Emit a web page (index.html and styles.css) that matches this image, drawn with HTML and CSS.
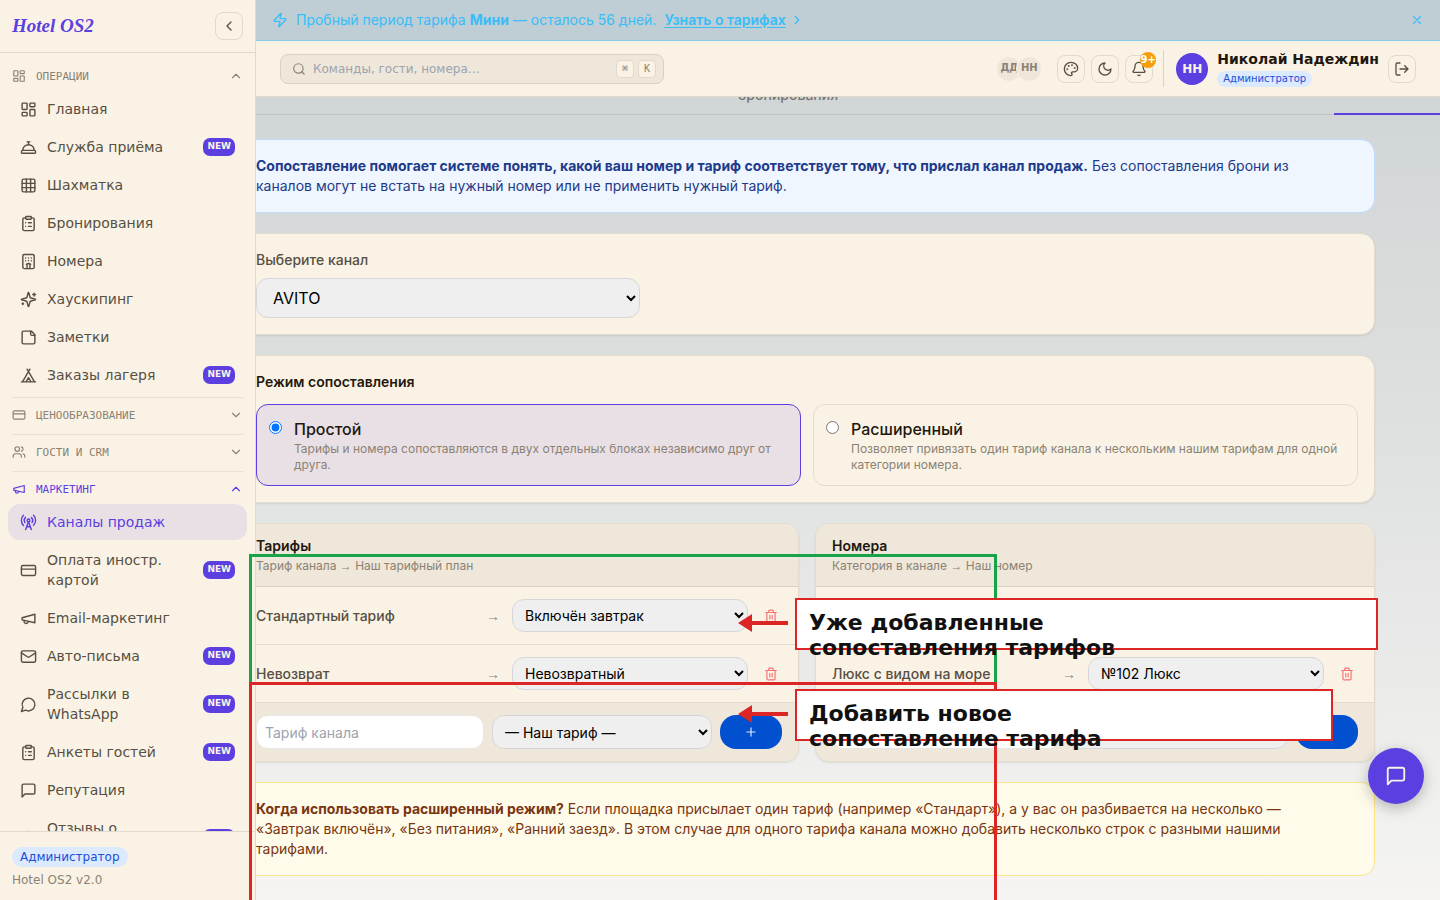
FILE: index.html
```html
<!DOCTYPE html>
<html lang="ru">
<head>
    <meta charset="UTF-8">
    <meta name="viewport" content="width=device-width, initial-scale=1.0">
    <title>Hotel OS2</title>
    <link rel="stylesheet" href="styles.css">
</head>
<body>
    <!-- icons -->
    <svg class="sprite" aria-hidden="true">
        <symbol id="i-dashboard" viewBox="0 0 24 24"><rect x="3" y="3" width="7" height="9" rx="1"/><rect x="14" y="3" width="7" height="5" rx="1"/><rect x="14" y="12" width="7" height="9" rx="1"/><rect x="3" y="16" width="7" height="5" rx="1"/></symbol>
        <symbol id="i-bell-service" viewBox="0 0 24 24"><path d="M3 20a1 1 0 0 1-1-1v-1a2 2 0 0 1 2-2h16a2 2 0 0 1 2 2v1a1 1 0 0 1-1 1Z"/><path d="M20 16a8 8 0 1 0-16 0"/><path d="M12 4v4"/><path d="M10 4h4"/></symbol>
        <symbol id="i-grid" viewBox="0 0 24 24"><rect x="3" y="3" width="18" height="18" rx="2"/><path d="M3 9h18M3 15h18M9 3v18M15 3v18"/></symbol>
        <symbol id="i-clipboard" viewBox="0 0 24 24"><rect x="8" y="2" width="8" height="4" rx="1"/><path d="M16 4h2a2 2 0 0 1 2 2v14a2 2 0 0 1-2 2H6a2 2 0 0 1-2-2V6a2 2 0 0 1 2-2h2"/><path d="M12 11h4M12 16h4M8 11h.01M8 16h.01"/></symbol>
        <symbol id="i-hotel" viewBox="0 0 24 24"><rect x="4" y="2" width="16" height="20" rx="2"/><path d="M10 22v-6.57M14 15.43V22M15 16a5 5 0 0 0-6 0M12 11h.01M12 7h.01M16 11h.01M16 7h.01M8 11h.01M8 7h.01"/></symbol>
        <symbol id="i-sparkles" viewBox="0 0 24 24"><path d="M9.94 15.5A2 2 0 0 0 8.5 14.06l-6.14-1.58a.5.5 0 0 1 0-.96L8.5 9.94A2 2 0 0 0 9.94 8.5l1.58-6.14a.5.5 0 0 1 .96 0L14.06 8.5A2 2 0 0 0 15.5 9.94l6.14 1.58a.5.5 0 0 1 0 .96L15.5 14.06a2 2 0 0 0-1.44 1.44l-1.58 6.14a.5.5 0 0 1-.96 0z"/><path d="M20 3v4M22 5h-4M4 17v2M5 18H3"/></symbol>
        <symbol id="i-note" viewBox="0 0 24 24"><path d="M16 3H5a2 2 0 0 0-2 2v14a2 2 0 0 0 2 2h14a2 2 0 0 0 2-2V8Z"/><path d="M15 3v4a2 2 0 0 0 2 2h4"/></symbol>
        <symbol id="i-tent" viewBox="0 0 24 24"><path d="M3.5 21 14 3M20.5 21 10 3M15.5 21 12 15l-3.5 6M2 21h20"/></symbol>
        <symbol id="i-card" viewBox="0 0 24 24"><rect x="2" y="5" width="20" height="14" rx="2"/><path d="M2 10h20"/></symbol>
        <symbol id="i-users" viewBox="0 0 24 24"><path d="M16 21v-2a4 4 0 0 0-4-4H6a4 4 0 0 0-4 4v2"/><circle cx="9" cy="7" r="4"/><path d="M22 21v-2a4 4 0 0 0-3-3.870M16 3.130a4 4 0 0 1 0 7.750"/></symbol>
        <symbol id="i-megaphone" viewBox="0 0 24 24"><path d="m3 11 18-5v12L3 14v-3z"/><path d="M11.6 16.8a3 3 0 1 1-5.8-1.6"/></symbol>
        <symbol id="i-tower" viewBox="0 0 24 24"><path d="M4.9 16.1C1 12.2 1 5.8 4.9 1.9M7.8 4.7a6.14 6.14 0 0 0-.8 7.5"/><circle cx="12" cy="9" r="2"/><path d="M16.2 4.8c2 2 2.26 5.11.8 7.47M19.1 1.9a9.96 9.96 0 0 1 0 14.1M9.5 18h5M8 22l4-11 4 11"/></symbol>
        <symbol id="i-mail" viewBox="0 0 24 24"><rect x="2" y="4" width="20" height="16" rx="2"/><path d="m22 7-8.97 5.7a1.94 1.94 0 0 1-2.06 0L2 7"/></symbol>
        <symbol id="i-bubble" viewBox="0 0 24 24"><path d="M7.9 20A9 9 0 1 0 4 16.1L2 22Z"/></symbol>
        <symbol id="i-message" viewBox="0 0 24 24"><path d="M21 15a2 2 0 0 1-2 2H7l-4 4V5a2 2 0 0 1 2-2h14a2 2 0 0 1 2 2z"/></symbol>
        <symbol id="i-star" viewBox="0 0 24 24"><path d="m12 2 3.1 6.3 6.9 1-5 4.9 1.2 6.8-6.2-3.2L5.8 21 7 14.2 2 9.3l6.9-1z"/></symbol>
        <symbol id="i-up" viewBox="0 0 24 24"><path d="m18 15-6-6-6 6"/></symbol>
        <symbol id="i-down" viewBox="0 0 24 24"><path d="m6 9 6 6 6-6"/></symbol>
        <symbol id="i-left" viewBox="0 0 24 24"><path d="m15 18-6-6 6-6"/></symbol>
        <symbol id="i-right" viewBox="0 0 24 24"><path d="m9 18 6-6-6-6"/></symbol>
        <symbol id="i-zap" viewBox="0 0 24 24"><path d="M4 14a1 1 0 0 1-.78-1.63l9.9-10.2a.5.5 0 0 1 .86.46l-1.92 6.02A1 1 0 0 0 13 10h7a1 1 0 0 1 .78 1.63l-9.9 10.2a.5.5 0 0 1-.86-.46l1.92-6.02A1 1 0 0 0 11 14z"/></symbol>
        <symbol id="i-x" viewBox="0 0 24 24"><path d="M18 6 6 18M6 6l12 12"/></symbol>
        <symbol id="i-search" viewBox="0 0 24 24"><circle cx="11" cy="11" r="8"/><path d="m21 21-4.3-4.3"/></symbol>
        <symbol id="i-palette" viewBox="0 0 24 24"><circle cx="13.5" cy="6.5" r=".5"/><circle cx="17.5" cy="10.5" r=".5"/><circle cx="8.5" cy="7.5" r=".5"/><circle cx="6.5" cy="12.5" r=".5"/><path d="M12 2C6.5 2 2 6.5 2 12s4.5 10 10 10c.93 0 1.65-.75 1.65-1.69 0-.44-.18-.83-.44-1.12-.29-.29-.44-.65-.44-1.13a1.64 1.64 0 0 1 1.67-1.67h2c3.05 0 5.55-2.5 5.55-5.55C21.97 6.01 17.46 2 12 2z"/></symbol>
        <symbol id="i-moon" viewBox="0 0 24 24"><path d="M12 3a6 6 0 0 0 9 9 9 9 0 1 1-9-9Z"/></symbol>
        <symbol id="i-bell" viewBox="0 0 24 24"><path d="M10.27 21a2 2 0 0 0 3.46 0M3.26 15.33A1 1 0 0 0 4 17h16a1 1 0 0 0 .74-1.67C19.41 13.96 18 12.5 18 8A6 6 0 0 0 6 8c0 4.5-1.41 5.96-2.74 7.33"/></symbol>
        <symbol id="i-logout" viewBox="0 0 24 24"><path d="M9 21H5a2 2 0 0 1-2-2V5a2 2 0 0 1 2-2h4M16 17l5-5-5-5M21 12H9"/></symbol>
        <symbol id="i-trash" viewBox="0 0 24 24"><path d="M3 6h18M19 6v14a2 2 0 0 1-2 2H7a2 2 0 0 1-2-2V6M8 6V4a2 2 0 0 1 2-2h4a2 2 0 0 1 2 2v2M10 11v6M14 11v6"/></symbol>
        <symbol id="i-plus" viewBox="0 0 24 24"><path d="M5 12h14M12 5v14"/></symbol>
    </svg>

    <div class="app">
        <aside class="sidebar">
            <div class="brand">
                <a class="logo" href="#">Hotel OS2</a>
                <button class="icon-btn" type="button" aria-label="Свернуть"><svg class="icon icon-16"><use href="#i-left"/></svg></button>
            </div>
            <nav class="nav">
                <div class="group">
                    <button class="group-head" type="button"><svg class="icon icon-14"><use href="#i-dashboard"/></svg><span>Операции</span><svg class="icon icon-14"><use href="#i-up"/></svg></button>
                    <div class="group-items">
                        <a class="item" href="#"><svg class="icon icon-17"><use href="#i-dashboard"/></svg><span>Главная</span></a>
                        <a class="item" href="#"><svg class="icon icon-17"><use href="#i-bell-service"/></svg><span>Служба приёма</span><b class="new">NEW</b></a>
                        <a class="item" href="#"><svg class="icon icon-17"><use href="#i-grid"/></svg><span>Шахматка</span></a>
                        <a class="item" href="#"><svg class="icon icon-17"><use href="#i-clipboard"/></svg><span>Бронирования</span></a>
                        <a class="item" href="#"><svg class="icon icon-17"><use href="#i-hotel"/></svg><span>Номера</span></a>
                        <a class="item" href="#"><svg class="icon icon-17"><use href="#i-sparkles"/></svg><span>Хаускипинг</span></a>
                        <a class="item" href="#"><svg class="icon icon-17"><use href="#i-note"/></svg><span>Заметки</span></a>
                        <a class="item" href="#"><svg class="icon icon-17"><use href="#i-tent"/></svg><span>Заказы лагеря</span><b class="new">NEW</b></a>
                    </div>
                </div>
                <div class="group">
                    <button class="group-head" type="button"><svg class="icon icon-14"><use href="#i-card"/></svg><span>Ценообразование</span><svg class="icon icon-14"><use href="#i-down"/></svg></button>
                </div>
                <div class="group">
                    <button class="group-head" type="button"><svg class="icon icon-14"><use href="#i-users"/></svg><span>Гости и CRM</span><svg class="icon icon-14"><use href="#i-down"/></svg></button>
                </div>
                <div class="group">
                    <button class="group-head open" type="button"><svg class="icon icon-14"><use href="#i-megaphone"/></svg><span>Маркетинг</span><svg class="icon icon-14"><use href="#i-up"/></svg></button>
                    <div class="group-items">
                        <a class="item active" href="#"><svg class="icon icon-17"><use href="#i-tower"/></svg><span>Каналы продаж</span></a>
                        <a class="item" href="#"><svg class="icon icon-17"><use href="#i-card"/></svg><span>Оплата иностр. картой</span><b class="new">NEW</b></a>
                        <a class="item" href="#"><svg class="icon icon-17"><use href="#i-megaphone"/></svg><span>Email-маркетинг</span></a>
                        <a class="item" href="#"><svg class="icon icon-17"><use href="#i-mail"/></svg><span>Авто-письма</span><b class="new">NEW</b></a>
                        <a class="item" href="#"><svg class="icon icon-17"><use href="#i-bubble"/></svg><span>Рассылки в WhatsApp</span><b class="new">NEW</b></a>
                        <a class="item" href="#"><svg class="icon icon-17"><use href="#i-clipboard"/></svg><span>Анкеты гостей</span><b class="new">NEW</b></a>
                        <a class="item" href="#"><svg class="icon icon-17"><use href="#i-message"/></svg><span>Репутация</span></a>
                        <a class="item cut" href="#"><svg class="icon icon-17"><use href="#i-star"/></svg><span>Отзывы о</span><b class="new">NEW</b></a>
                    </div>
                </div>
            </nav>
            <div class="side-foot">
                <span class="role">Администратор</span>
                <p>Hotel OS2 v2.0</p>
            </div>
        </aside>

        <main class="main">
            <div class="trial">
                <svg class="icon icon-16"><use href="#i-zap"/></svg>
                <p>Пробный период тарифа <b>Мини</b> — осталось 56 дней.</p>
                <a href="#">Узнать о тарифах</a>
                <svg class="icon icon-14"><use href="#i-right"/></svg>
                <button type="button" aria-label="Закрыть"><svg class="icon icon-14"><use href="#i-x"/></svg></button>
            </div>

            <header class="topbar">
                <div class="search">
                    <svg class="icon icon-14"><use href="#i-search"/></svg>
                    <input type="text" placeholder="Команды, гости, номера…" aria-label="Поиск">
                    <kbd>⌘</kbd>
                    <kbd>K</kbd>
                </div>
                <div class="online"><span>ДД</span><span>НН</span></div>
                <div class="tools">
                    <button class="icon-btn" type="button" aria-label="Тема"><svg class="icon icon-16"><use href="#i-palette"/></svg></button>
                    <button class="icon-btn" type="button" aria-label="Тёмный режим"><svg class="icon icon-16"><use href="#i-moon"/></svg></button>
                    <button class="icon-btn" type="button" aria-label="Уведомления"><svg class="icon icon-16"><use href="#i-bell"/></svg><i class="count">9+</i></button>
                </div>
                <div class="user">
                    <span class="avatar">НН</span>
                    <div class="user-info">
                        <b>Николай Надеждин</b>
                        <span class="role small">Администратор</span>
                    </div>
                    <button class="icon-btn" type="button" aria-label="Выйти"><svg class="icon icon-16"><use href="#i-logout"/></svg></button>
                </div>
            </header>

            <div class="tabs">
                <a class="tab" href="#">бронирования</a>
                <a class="tab current" href="#" aria-label="Сопоставление"></a>
            </div>

            <div class="content">
                <section class="note blue"><b>Сопоставление помогает системе понять, какой ваш номер и тариф соответствует тому, что прислал канал продаж.</b> Без сопоставления брони из<br>каналов могут не встать на нужный номер или не применить нужный тариф.</section>

                <section class="card">
                    <label class="label" for="channel">Выберите канал</label>
                    <select class="select big" id="channel"><option>AVITO</option></select>
                </section>

                <section class="card">
                    <h2>Режим сопоставления</h2>
                    <div class="modes">
                        <label class="mode checked">
                            <input type="radio" name="mode" checked>
                            <span><strong>Простой</strong><small>Тарифы и номера сопоставляются в двух отдельных блоках независимо друг от друга.</small></span>
                        </label>
                        <label class="mode">
                            <input type="radio" name="mode">
                            <span><strong>Расширенный</strong><small>Позволяет привязать один тариф канала к нескольким нашим тарифам для одной категории номера.</small></span>
                        </label>
                    </div>
                </section>

                <div class="maps">
                    <section class="map">
                        <div class="map-head">
                            <h2>Тарифы</h2>
                            <p>Тариф канала <span class="arrow">→</span> Наш тарифный план</p>
                        </div>
                        <div class="map-row">
                            <label for="rate1">Стандартный тариф</label>
                            <span class="arrow">→</span>
                            <select class="select" id="rate1"><option>Включён завтрак</option></select>
                            <button class="trash" type="button" aria-label="Удалить"><svg class="icon icon-14"><use href="#i-trash"/></svg></button>
                        </div>
                        <div class="map-row">
                            <label for="rate2">Невозврат</label>
                            <span class="arrow">→</span>
                            <select class="select" id="rate2"><option>Невозвратный</option></select>
                            <button class="trash" type="button" aria-label="Удалить"><svg class="icon icon-14"><use href="#i-trash"/></svg></button>
                        </div>
                        <div class="map-add">
                            <input type="text" placeholder="Тариф канала" aria-label="Тариф канала">
                            <select class="select" aria-label="Наш тариф"><option>— Наш тариф —</option></select>
                            <button class="add" type="button" aria-label="Добавить"><svg class="icon icon-14"><use href="#i-plus"/></svg></button>
                        </div>
                    </section>
                    <section class="map">
                        <div class="map-head">
                            <h2>Номера</h2>
                            <p>Категория в канале <span class="arrow">→</span> Наш номер</p>
                        </div>
                        <div class="map-row"></div>
                        <div class="map-row">
                            <label for="room2">Люкс с видом на море</label>
                            <span class="arrow">→</span>
                            <select class="select" id="room2"><option>№102 Люкс</option></select>
                            <button class="trash" type="button" aria-label="Удалить"><svg class="icon icon-14"><use href="#i-trash"/></svg></button>
                        </div>
                        <div class="map-add">
                            <input type="text" aria-label="Категория в канале">
                            <select class="select" aria-label="Наш номер"></select>
                            <button class="add" type="button" aria-label="Добавить"></button>
                        </div>
                    </section>
                </div>

                <section class="note yellow"><b>Когда использовать расширенный режим?</b> Если площадка присылает один тариф (например «Стандарт»), а у вас он разбивается на несколько —<br>«Завтрак включён», «Без питания», «Ранний заезд». В этом случае для одного тарифа канала можно добавить несколько строк с разными нашими<br>тарифами.</section>
            </div>
        </main>
    </div>

    <button class="chat" type="button" aria-label="Чат"><svg class="icon icon-22"><use href="#i-message"/></svg></button>

    <!-- annotations over the page -->
    <div class="frame green"></div>
    <div class="frame red"></div>
    <svg class="pointer first" viewBox="0 0 50 18"><path d="M0 9 14 0v7h36v4H14v7z"/></svg>
    <svg class="pointer second" viewBox="0 0 50 18"><path d="M0 9 14 0v7h36v4H14v7z"/></svg>
    <div class="callout first">Уже добавленные<br>сопоставления тарифов</div>
    <div class="callout second">Добавить новое<br>сопоставление тарифа</div>
</body>
</html>
```
FILE: styles.css
```css
* {
    box-sizing: border-box;
    margin: 0;
}

body {
    height: 100vh;
    overflow: hidden;
    position: relative;
    font-family: Inter, "Liberation Sans", sans-serif;
    font-size: 14px;
    line-height: 20px;
    color: #1f180f;
    background: linear-gradient(180deg, #cdd2d3 0%, #dbdedd 40%, #f5f4f2 100%);
}

a {
    color: inherit;
    text-decoration: none;
}

button,
input,
select {
    font-family: inherit;
    font-size: 14px;
}

button {
    border: 0;
    padding: 0;
    background: none;
    color: inherit;
}

h2 {
    font-size: 14px;
    font-weight: 600;
}

.sprite {
    display: none;
}

.icon {
    flex: none;
    fill: none;
    stroke: currentColor;
    stroke-width: 2;
    stroke-linecap: round;
    stroke-linejoin: round;
}
.icon-14 { width: 14px; height: 14px; }
.icon-16 { width: 16px; height: 16px; }
.icon-17 { width: 17px; height: 17px; }
.icon-22 { width: 22px; height: 22px; }

.app {
    display: flex;
    height: 100%;
}

/* sidebar */
.sidebar {
    display: flex;
    flex-direction: column;
    flex: none;
    width: 256px;
    border-right: 1px solid #e1dacc;
    background: #faf3e5;
    font-family: "DejaVu Sans", sans-serif;
    color: #574f43;
}

.brand {
    display: flex;
    align-items: center;
    justify-content: space-between;
    padding: 12px;
    border-bottom: 1px solid #e1dacc;
}

.logo {
    font-family: "Liberation Serif", serif;
    font-size: 19px;
    font-weight: 700;
    font-style: italic;
    color: #5b3fe0;
}

.icon-btn {
    position: relative;
    display: flex;
    align-items: center;
    justify-content: center;
    width: 28px;
    height: 28px;
    border: 1px solid #e1dacc;
    border-radius: 8px;
    color: #574f43;
}

.nav {
    flex: 1;
    min-height: 0;
    overflow: hidden;
    padding: 6px 8px 0;
}

.group {
    padding: 2px 0 4px;
}

.group + .group {
    border-top: 1px solid #e9e2d4;
    margin: 0 4px;
}

.group-head {
    display: flex;
    align-items: center;
    gap: 10px;
    width: 100%;
    height: 30px;
    font-family: "DejaVu Sans Mono", monospace;
    font-size: 11px;
    text-transform: uppercase;
    text-align: left;
    color: #8b8274;
}

.group-head span {
    flex: 1;
}

.group:first-child .group-head {
    padding: 0 4px;
}

.group-head.open {
    color: #5b3fe0;
}

.group-items {
    display: flex;
    flex-direction: column;
    gap: 2px;
}

.group + .group .group-items {
    margin: 0 -4px;
}

.item {
    display: flex;
    align-items: center;
    gap: 10px;
    padding: 8px 12px;
    border-radius: 12px;
}

.item span {
    flex: 1;
}

.item.active {
    background: #e9e0e5;
    color: #5b3fe0;
}

.item.cut {
    min-height: 56px;
}

.item.cut span {
    align-self: flex-start;
}

.new {
    height: 18px;
    padding: 0 4px;
    border-radius: 7px;
    background: #5b3fe0;
    color: #faf3e5;
    font-size: 9px;
    line-height: 16px;
}

.side-foot {
    padding: 15px 12px 12px;
    border-top: 1px solid #e1dacc;
    font-size: 12px;
    line-height: 16px;
    color: #8b8274;
}

.side-foot p {
    margin-top: 5px;
}

.role {
    display: inline-block;
    padding: 2px 8px;
    border-radius: 10px;
    background: #dbeafe;
    color: #1d4ed8;
    font-size: 12px;
    line-height: 16px;
}

.role.small {
    padding: 1px 6px;
    font-size: 10px;
    line-height: 14px;
}

/* main column */
.main {
    display: flex;
    flex-direction: column;
    flex: 1;
    min-width: 0;
    overflow: hidden;
}

.trial {
    display: flex;
    align-items: center;
    gap: 8px;
    flex: none;
    height: 41px;
    padding: 0 16px;
    border-bottom: 1px solid #8ccbe8;
    background: #bfcdd4;
    color: #38bdf8;
}

.trial a {
    font-weight: 600;
    text-decoration: underline;
    text-underline-offset: 2px;
}

.trial a + .icon {
    margin-left: -4px;
}

.trial button {
    display: flex;
    margin-left: auto;
}

.topbar {
    position: relative;
    z-index: 1;
    display: flex;
    align-items: center;
    flex: none;
    height: 56px;
    padding: 0 24px;
    border-bottom: 1px solid #e1dacc;
    background: #faf3e5;
    font-family: "DejaVu Sans", sans-serif;
}

.search {
    display: flex;
    align-items: center;
    gap: 4px;
    width: 384px;
    height: 30px;
    padding: 0 7px 0 11px;
    border: 1px solid #d9d1c3;
    border-radius: 8px;
    background: #efe7da;
    color: #8b8274;
}

.search input {
    flex: 1;
    min-width: 0;
    padding: 0 3px;
    border: 0;
    background: none;
    font-size: 12px;
}

input::placeholder {
    color: #9ca3af;
}

kbd {
    width: 18px;
    height: 18px;
    border: 1px solid #e1dacc;
    border-radius: 4px;
    background: #faf3e5;
    font-family: "DejaVu Sans Mono", monospace;
    font-size: 10px;
    line-height: 16px;
    text-align: center;
}

.online {
    display: flex;
    margin-left: auto;
    margin-right: 15px;
}

.online span {
    width: 26px;
    height: 26px;
    border: 1px solid #faf3e5;
    border-radius: 50%;
    background: #efe7da;
    color: #8b8274;
    font-size: 10px;
    font-weight: 700;
    line-height: 22px;
    text-align: center;
}

.online span + span {
    margin-left: -6px;
}

.tools {
    display: flex;
    gap: 6px;
    padding-right: 10px;
}

.count {
    position: absolute;
    top: -4px;
    right: -4px;
    width: 16px;
    height: 16px;
    border-radius: 50%;
    background: #f59e0b;
    color: #fff;
    font-size: 10px;
    font-style: normal;
    font-weight: 700;
    line-height: 15px;
    display: flex;
    justify-content: center;
}

.user {
    display: flex;
    align-items: center;
    gap: 9px;
    height: 37px;
    padding-left: 12px;
    border-left: 1px solid #d9d1c3;
}

.avatar {
    width: 32px;
    height: 32px;
    border-radius: 50%;
    background: #5b3fe0;
    color: #faf3e5;
    font-size: 12px;
    font-weight: 700;
    line-height: 32px;
    text-align: center;
}

.user-info {
    display: flex;
    flex-direction: column;
    align-items: flex-start;
    gap: 3px;
    line-height: 18px;
}

.tabs {
    display: flex;
    align-items: flex-end;
    justify-content: space-between;
    flex: none;
    height: 18px;
    border-bottom: 1px solid #bfc3c3;
}

.tab {
    margin-left: 482px;
    padding-bottom: 9px;
    font-weight: 500;
    color: #777470;
}

.tab.current {
    width: 106px;
    height: 2px;
    margin: 0 0 -1px;
    padding: 0;
    background: #5b3fe0;
}

/* the content is scrolled a little to the right, its left edge goes under the sidebar */
.content {
    display: flex;
    flex-direction: column;
    gap: 20px;
    flex: none;
    width: calc(100% - 48px);
    margin: 24px 0 0 -17px;
}

.card,
.note,
.map {
    border: 1px solid #e3dccd;
    border-radius: 14px;
    background: #faf3e5;
}

.card,
.map {
    box-shadow: 0 1px 2px rgba(0, 0, 0, 0.08);
}

.card,
.note {
    padding: 16px;
}

.note.blue {
    border-color: #bfdbfe;
    background: #eff6ff;
    color: #1e3a8a;
}

.note.yellow {
    border-color: #fde68a;
    background: #fffbeb;
    color: #78350f;
}

.note b {
    font-weight: 700;
}

.label {
    display: block;
    margin-bottom: 8px;
    font-weight: 500;
    color: #574f43;
}

.select {
    height: 33px;
    padding: 0 8px;
    border: 1px solid #d6d6d8;
    border-radius: 12px;
    background-color: #efefef;
    color: #000;
}

.select.big {
    display: block;
    width: 384px;
    height: 40px;
    padding: 0 0 0 12px;
    font-size: 16px;
}

.modes {
    display: flex;
    gap: 12px;
    margin-top: 12px;
}

.mode {
    display: flex;
    align-items: flex-start;
    gap: 12px;
    flex: 1;
    padding: 12px;
    border: 1px solid #e3dccd;
    border-radius: 12px;
}

.mode.checked {
    border-color: #5b3fe0;
    background: #e9e0e5;
}

.mode input {
    flex: none;
    width: 13px;
    height: 13px;
    margin: 4px 0 0;
}

.mode strong {
    display: block;
    font-size: 16px;
    font-weight: 500;
    line-height: 24px;
}

.mode small {
    display: block;
    font-size: 12px;
    line-height: 16px;
    color: #8b8274;
}

.maps {
    display: flex;
    gap: 16px;
}

.map {
    flex: 1;
    min-width: 0;
    overflow: hidden;
}

.map-head {
    padding: 12px 16px;
    border-bottom: 1px solid #d9d1c3;
    background: #efe7da;
}

.map-head p {
    margin-top: 2px;
    font-size: 12px;
    line-height: 16px;
    color: #8b8274;
}

.map-row {
    display: flex;
    align-items: center;
    gap: 12px;
    height: 58px;
    padding: 0 16px;
    border-bottom: 1px solid #e3dccd;
}

.map-row label {
    flex: 1;
    font-weight: 500;
    color: #574f43;
}

.map-row .select {
    width: 236px;
}

.arrow {
    font-family: "Liberation Sans", sans-serif;
    color: #8b8274;
}

.trash {
    display: flex;
    padding: 4px;
    color: #f87171;
}

.map-add {
    display: flex;
    gap: 8px;
    padding: 12px 16px;
    background: #efe7da;
}

.map-add input {
    flex: 1;
    min-width: 0;
    height: 34px;
    padding: 0 8px;
    border: 1px solid #e8e6e3;
    border-radius: 12px;
    background: #fff;
}

.map-add .select {
    width: 220px;
    height: 34px;
}

.add {
    display: flex;
    align-items: center;
    justify-content: center;
    width: 62px;
    border-radius: 16px;
    background: #0050cf;
    color: #dbeafe;
}

.chat {
    position: absolute;
    right: 16px;
    bottom: 96px;
    display: flex;
    align-items: center;
    justify-content: center;
    width: 56px;
    height: 56px;
    border-radius: 50%;
    background: #5b3fe0;
    color: #faf3e5;
    box-shadow: 0 4px 14px rgba(0, 0, 0, 0.25);
}

/* annotations */
.frame {
    position: absolute;
    left: 249px;
    width: 748px;
    border: 3px solid;
}

.frame.green {
    top: 554px;
    height: 131px;
    border-color: #16a34a;
}

.frame.red {
    top: 682px;
    height: 240px;
    border-color: #dc2626;
}

.pointer {
    position: absolute;
    left: 738px;
    width: 50px;
    height: 18px;
    fill: #dc2626;
}

.pointer.first { top: 614px; }
.pointer.second { top: 705px; }

.callout {
    position: absolute;
    left: 795px;
    height: 52px;
    padding: 10px 12px;
    border: 2px solid #dc2626;
    background: #fff;
    color: #111;
    font-family: "DejaVu Sans", sans-serif;
    font-size: 22px;
    font-weight: 700;
    line-height: 25px;
    white-space: nowrap;
}

.callout.first {
    top: 598px;
    width: 583px;
}

.callout.second {
    top: 689px;
    width: 538px;
}
```
